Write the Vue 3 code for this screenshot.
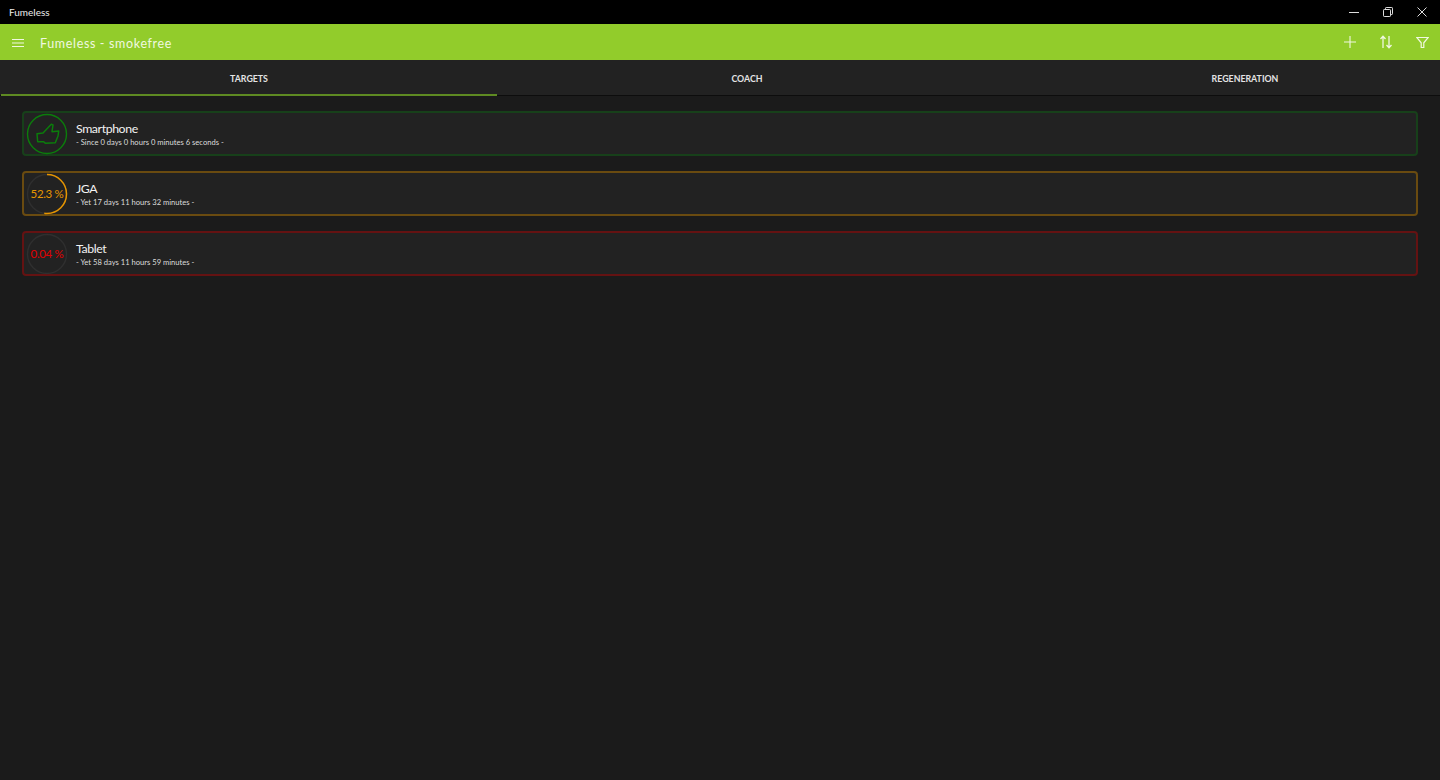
<template>
  <div class="window">
    <div class="titlebar">
      <span class="titlebar__name">Fumeless</span>
      <div class="titlebar__controls">
        <button class="ctl">
          <svg width="10" height="10" viewBox="0 0 10 10"><path d="M0 5.500h10" stroke="#ddd" fill="none" /></svg>
        </button>
        <button class="ctl">
          <svg width="10" height="10" viewBox="0 0 10 10"><path d="M2.500 2.500V1.200q0-.7.7-.7h5.600q.7 0 .7.7v5.600q0 .7-.7.7H7.500M1.200 2.500h5.600q.7 0 .7.7v5.600q0 .7-.7.7H1.200q-.7 0-.7-.7V3.200q0-.7.7-.7z" stroke="#ddd" fill="none" /></svg>
        </button>
        <button class="ctl">
          <svg width="10" height="10" viewBox="0 0 10 10"><path d="M.5.500l9 9M9.500.500l-9 9" stroke="#ddd" fill="none" /></svg>
        </button>
      </div>
    </div>

    <header class="appbar">
      <button class="appbar__menu">
        <svg width="12" height="10" viewBox="0 0 12 10"><path d="M0 1.500h12M0 5h12M0 8.500h12" stroke="#f0f8e0" stroke-width="1.100" fill="none" /></svg>
      </button>
      <h1 class="appbar__title">Fumeless - smokefree</h1>
      <div class="appbar__actions">
        <button class="action">
          <svg width="14" height="14" viewBox="0 0 14 14"><path d="M7 1v12M1 7h12" stroke="#f0f8e0" stroke-width="1.100" fill="none" /></svg>
        </button>
        <button class="action">
          <svg width="12" height="14" viewBox="0 0 12 14"><path d="M3 13V1.500M.5 4 3 1.200 5.500 4M9 1v11.500M6.500 10 9 12.800 11.500 10" stroke="#f0f8e0" stroke-width="1.300" fill="none" /></svg>
        </button>
        <button class="action">
          <svg width="13" height="13" viewBox="0 0 13 13"><path d="M.8 1.500h11.400L7.800 6.800v4.700H5.200V6.800z" stroke="#f0f8e0" stroke-width="1.200" fill="none" /></svg>
        </button>
      </div>
    </header>

    <nav class="tabs">
      <div
        v-for="tab in tabs"
        :key="tab"
        class="tabs__item"
        :class="{ 'tabs__item--active': tab === 'TARGETS' }"
      >
        {{ tab }}
      </div>
    </nav>

    <main class="list">
      <article
        v-for="item in items"
        :key="item.title"
        class="card"
        :class="`card--${item.tone}`"
      >
        <div class="ring">
          <svg class="ring__svg" width="42" height="42" viewBox="0 0 42 42">
            <circle cx="21" cy="21" r="19.500" fill="none" :stroke="item.track" stroke-width="1.400" />
            <circle
              v-if="item.percent"
              cx="21"
              cy="21"
              r="19.500"
              fill="none"
              :stroke="item.color"
              stroke-width="1.500"
              pathLength="100"
              :stroke-dasharray="`${item.percent} 100`"
              transform="rotate(-90 21 21)"
            />
            <path
              v-if="item.thumb"
              d="M11 20.700 17 20l8.300-8.700 1.700.7-1 6.700 6.700-.7-.7 5-2.700 6.700-10 .6-1.600-1.600-6 0z"
              fill="none"
              :stroke="item.color"
              stroke-width="1.500"
              stroke-linejoin="round"
            />
          </svg>
          <span v-if="item.label" class="ring__label">{{ item.label }}</span>
        </div>
        <div class="card__text">
          <strong>{{ item.title }}</strong>
          <p>{{ item.detail }}</p>
        </div>
      </article>
    </main>
  </div>
</template>

<script setup>
const tabs = ['TARGETS', 'COACH', 'REGENERATION']

const items = [
  {
    title: 'Smartphone',
    detail: '- Since 0 days 0 hours 0 minutes 6 seconds -',
    tone: 'green',
    color: '#0b7d0b',
    track: '#0b7d0b',
    thumb: true
  },
  {
    title: 'JGA',
    detail: '- Yet 17 days 11 hours 32 minutes -',
    tone: 'amber',
    color: '#e69500',
    track: '#2f2f2f',
    percent: 52.3,
    label: '52.3 %'
  },
  {
    title: 'Tablet',
    detail: '- Yet 58 days 11 hours 59 minutes -',
    tone: 'red',
    color: '#e00000',
    track: '#2f2f2f',
    percent: 0.04,
    label: '0.04 %'
  }
]
</script>

<style>
html,
body {
  margin: 0;
  background: #1b1b1b;
}
</style>

<style scoped>
.window {
  display: flex;
  flex-direction: column;
  height: 780px;
  overflow: hidden;
  background: #1b1b1b;
  color: #fff;
  font-family: Lato, "Open Sans", sans-serif;
}

button {
  display: flex;
  align-items: center;
  justify-content: center;
  padding: 0;
  background: none;
  border: 0;
}

.titlebar {
  display: flex;
  flex: none;
  align-items: center;
  justify-content: space-between;
  height: 24px;
  padding: 0 1px 0 9px;
  background: #000;
}

.titlebar__name {
  font-size: 10px;
  color: #eee;
}

.titlebar__controls {
  display: flex;
}

.ctl {
  width: 34px;
  height: 24px;
}

.appbar {
  display: flex;
  flex: none;
  align-items: center;
  height: 36px;
  background: #92cc2b;
}

.appbar__menu {
  width: 36px;
  height: 36px;
  padding-top: 2px;
}

.appbar__title {
  margin: 0 0 0 4px;
  padding-top: 2px;
  font-size: 12.500px;
  font-weight: 400;
  letter-spacing: 0.65px;
  color: #f0f8e0;
}

.appbar__actions {
  display: flex;
  margin-left: auto;
}

.action {
  width: 36px;
  height: 36px;
}

.tabs {
  display: grid;
  flex: none;
  grid-template-columns: repeat(3, 496px);
  column-gap: 2px;
  height: 36px;
  padding-left: 1px;
  background: #222;
  box-sizing: border-box;
  border-bottom: 1px solid #0d0d0d;
}

.tabs__item {
  display: flex;
  align-items: center;
  justify-content: center;
  height: 36px;
  padding-top: 1px;
  box-sizing: border-box;
  font-size: 8.800px;
  font-weight: 700;
  color: #e4e4e4;
}

.tabs__item--active {
  padding-top: 3px;
  border-bottom: 2px solid #5e8a22;
}

.list {
  display: flex;
  flex-direction: column;
  gap: 15px;
  padding: 15px 22px;
}

.card {
  display: flex;
  align-items: center;
  gap: 8px;
  height: 45px;
  padding-left: 2px;
  background: #222;
  border: 2px solid;
  border-radius: 4px;
  box-sizing: border-box;
}

.card--green {
  border-color: #17401a;
}

.card--amber {
  border-color: #6a4b10;
}

.card--red {
  border-color: #641212;
}

.ring {
  position: relative;
  width: 42px;
  height: 42px;
  flex: none;
}

.ring__svg {
  display: block;
}

.ring__label {
  position: absolute;
  inset: 0;
  display: flex;
  align-items: center;
  justify-content: center;
  font-size: 11.500px;
  letter-spacing: -0.35px;
  white-space: nowrap;
}

.card--amber .ring__label {
  color: #e69500;
}

.card--red .ring__label {
  color: #e00000;
}

.card__text {
  padding-top: 1px;
}

.card__text strong {
  display: block;
  font-size: 12.300px;
  font-weight: 400;
  letter-spacing: -0.4px;
  line-height: 16px;
  color: #f2f2f2;
}

.card__text p {
  margin: 0;
  font-size: 7.600px;
  line-height: 10px;
  color: #dcdcdc;
}
</style>
